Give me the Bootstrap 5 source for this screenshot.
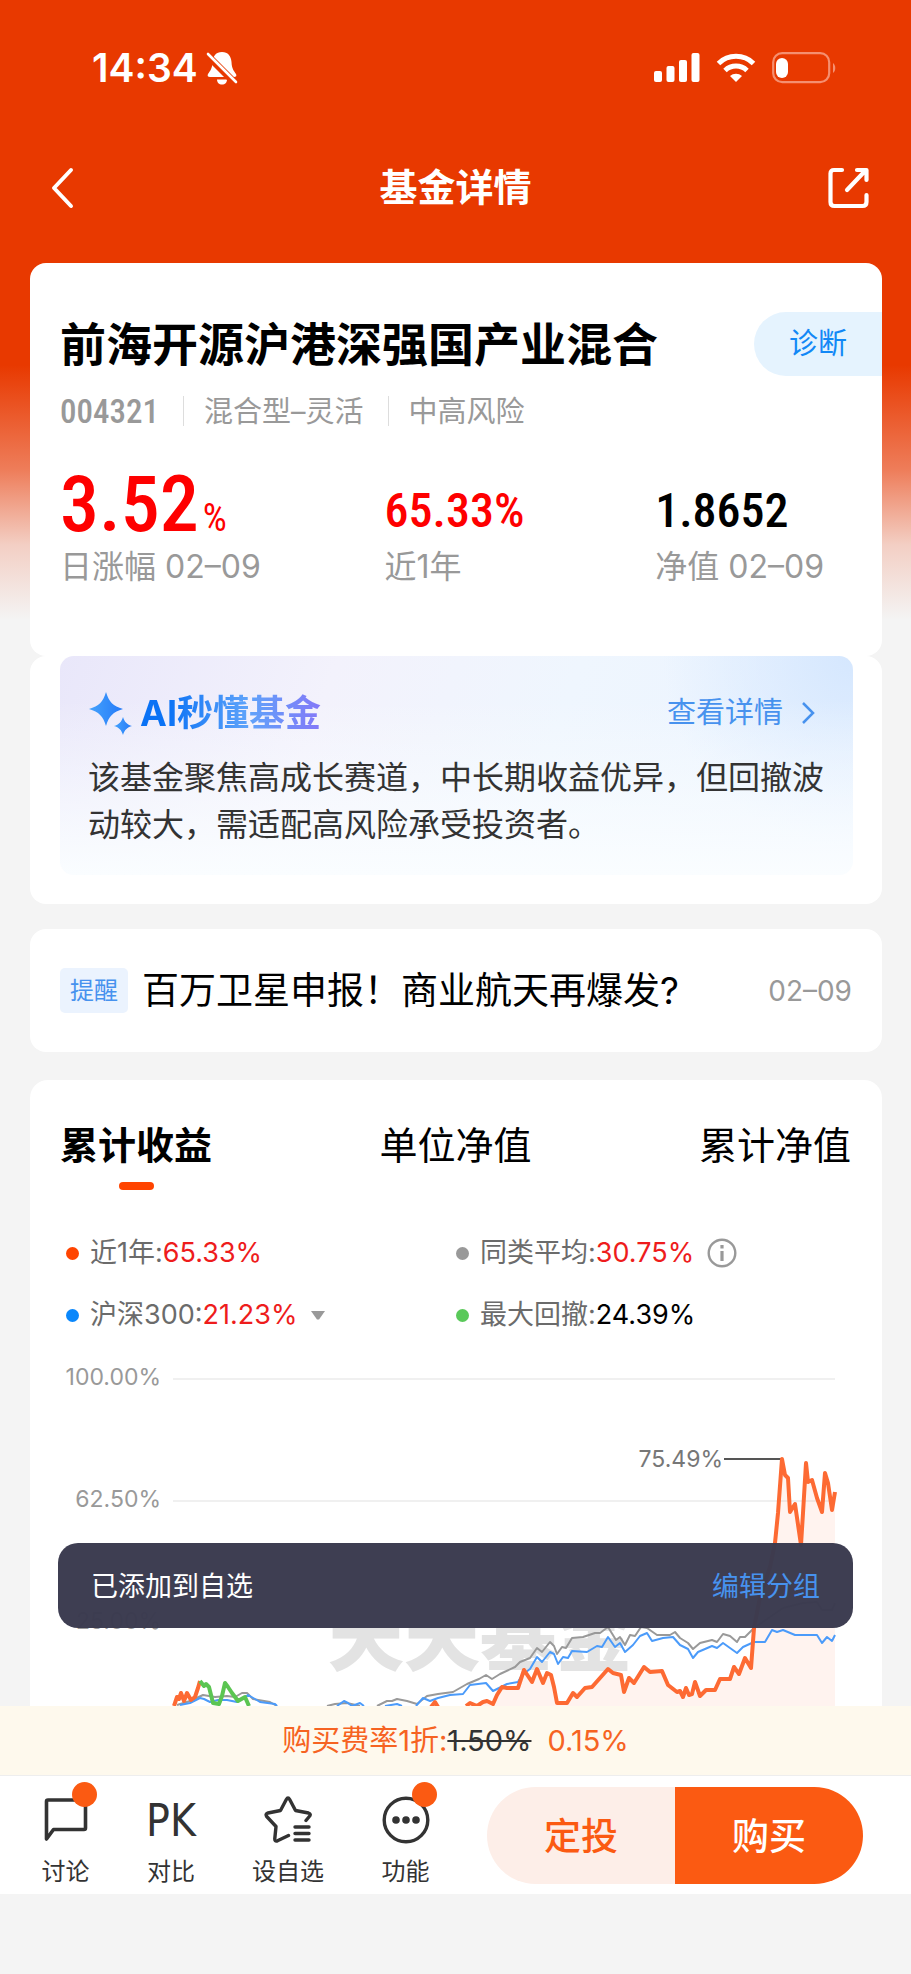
<!DOCTYPE html>
<html lang="zh-CN">
<head>
<meta charset="utf-8">
<meta name="viewport" content="width=device-width, initial-scale=1">
<title>基金详情</title>
<link rel="stylesheet" href="https://cdn.jsdelivr.net/npm/bootstrap@5.3.0/dist/css/bootstrap.min.css">
<style>
  body { font-family: Inter, "Noto Sans CJK SC", sans-serif; background: #f4f4f4; color: #000; font-size: 28px; }
  svg { display: block; flex: none; }
  a { text-decoration: none; }
  .page { background: linear-gradient(#e83900 365px, #ee7d5a 470px, #f3cfc4 545px, #f4f4f4 620px); }
  .status { padding: 40px 74px 0 92px; color: #fff; }
  .status > div { height: 56px; }
  .status-icons { gap: 16px; }
  .clock { font-size: 39px; font-weight: 600; line-height: 56px; }
  .topbar { height: 56px; margin: 64px 42px 47px; color: #fff; }
  .topbar h1 { font-size: 38px; font-weight: 700; }
  .topbar button { background: none; border: 0; color: inherit; padding: 0; }
  .sheets { padding: 0 29px 0 30px; }
  .sheet { background: #fff; border-radius: 16px; }
  .quote { padding: 49px 0 69px 30px; }
  .quote h2 { font-size: 46px; font-weight: 700; line-height: 64px; white-space: nowrap; }
  .diagnose { background: #e5f3fe; color: #1288f6; border: 0; border-radius: 32px 0 0 32px; width: 128px; height: 64px; font-size: 29px; }
  .muted { color: #999; }
  .din { font-family: "Roboto Condensed", "Liberation Sans Narrow", Roboto, sans-serif; font-weight: 500; }
  .meta { margin-top: 20px; height: 30px; font-size: 29px; line-height: 32px; }
  .meta .din { font-size: 33px; }
  .meta i { width: 1px; background: #ddd; height: 30px; margin: 0 20px 0 24px; }
  .stats { display: grid; grid-template-columns: 325fr 271fr 197fr; margin-top: 41px; margin-right: 30px; }
  .stats .din { font-size: 48px; line-height: 88px; height: 80px; display: flex; align-items: baseline; }
  .stats .din.big { font-size: 78px; line-height: 76px; }
  .stats .din .unit { font-size: 38px; font-weight: 400; margin-left: 4px; }
  .stats .muted { font-size: 32px; line-height: 40px; }
  .up { color: #fe0000; }
  .ai-wrap { padding: 0 29px 29px 30px; }
  .ai { border-radius: 14px; padding: 33px 28px 27px;
    background: linear-gradient(rgba(255,255,255,0) 20%, #fafdff 100%),
      radial-gradient(circle at 100% 0, #d5e7fe 0, rgba(213,231,254,0) 190px),
      linear-gradient(110deg, #e9e7fa 0, #f3f2fc 32%, #eff6fe 60%, #eaf3ff 100%); }
  .ai-head { height: 48px; }
  .ai-head strong { font-size: 36px; line-height: 48px; margin-left: 8px; background: linear-gradient(90deg, #0a72f5 15%, #5fa3fa 60%, #8478f8); -webkit-background-clip: text; background-clip: text; color: transparent; }
  .ai-head a { color: #4792ee; font-size: 29px; margin-right: 10px; gap: 18px; }
  .ai p { font-size: 32px; line-height: 47px; color: #333; margin: 17px -4px 0 0; }
  .notice { margin-top: 25px; height: 123px; padding: 0 30px; }
  .notice .tag { background: #ebf3fe; color: #4792ee; font-size: 24px; line-height: 45px; border-radius: 5px; width: 68px; text-align: center; }
  .notice a { color: #000; font-size: 37px; margin-left: 14px; }
  .perf { margin-top: 28px; border-radius: 18px 18px 0 0; }
  .tabs { padding: 40px 31px 0 30px; }
  .tabs button { background: none; border: 0; padding: 0; font-size: 38px; line-height: 50px; color: #000; }
  .tabs .active { font-weight: 700; }
  .tabs .active::after { content: ""; display: block; width: 35px; height: 8px; border-radius: 4px; background: #ff4400; margin: 12px auto 0; }
  .legend { display: grid; grid-template-columns: 390fr 397fr; row-gap: 22px; margin: 43px 29px 15px 36px; font-size: 27px; line-height: 40px; color: #6b6b6b; }
  .legend > div { display: flex; align-items: center; height: 40px; }
  .legend .dot { width: 13px; height: 13px; border-radius: 50%; margin-right: 11px; }
  .legend b { font-weight: 400; }
  .legend svg { margin-left: 13px; }
  .legend .red { color: #ee1c1c; }
  .chart { position: relative; }
  .chart > svg { width: 100%; height: auto; }
  .axis { font-size: 23px; fill: #999; text-anchor: end; }
  .notify { position: absolute; left: 28px; right: 29px; top: 193px; height: 85px; border-radius: 20px; background: rgba(58,58,79,.98); color: #fff; padding: 3px 33px 0; font-size: 27px; }
  .notify a { color: #4792ee; }
  .fee { background: #fef9ed; height: 69px; color: #f66322; font-size: 29px; }
  .fee s { color: #333; }
  .dock { background: #fff; border-top: 1px solid #eee; height: 119px; padding: 0 48px 0 13px; gap: 28px; }
  .tools { flex: 446 0 0; display: grid; grid-template-columns: 105fr 106fr 128fr 107fr; }
  .tools button { border: 0; background: none; padding: 19px 0 0; color: #333; font-size: 24px; line-height: 36px; display: flex; flex-direction: column; align-items: center; }
  .tools .glyph { height: 50px; position: relative; margin-bottom: 9px; }
  .tools .pk { font-family: "DejaVu Sans Condensed", "DejaVu Sans", sans-serif; font-size: 44px; line-height: 52px; }
  .alert-dot { position: absolute; width: 25px; height: 25px; border-radius: 50%; background: #fb5a12; right: -7px; top: -13px; }
  .trade { flex: 376 0 0; height: 97px; align-self: center; border-radius: 49px; overflow: hidden; }
  .trade button { flex: 1; border: 0; padding: 4px 0 0; font-size: 37px; font-weight: 500; }
  .plan { background: #fdeee8; color: #fb5a12; }
  .buy { background: #fb5a12; color: #fff; }
  .home-gap { height: 80px; }
</style>
</head>
<body>
<div class="page">
  <header>
    <div class="status"><div class="d-flex align-items-center">
      <span class="clock">14:34</span>
      <svg class="ms-2" width="32" height="34" viewBox="0 0 32 34" fill="#fff"><path d="M16 1c6 0 9 4 9.500 10 .3 7 2.500 9 4.500 12 1 2 0 3-2 3H4c-2 0-3-1-2-3 2-3 4.200-5 4.500-12C7 5 10 1 16 1z"/><path d="M11 28.500h10c0 3-2 5-5 5s-5-2-5-5z"/><path d="M0 3l30 30" stroke="#e83900" stroke-width="7"/><path d="M2 3l28 28" stroke="#fff" stroke-width="2.600" stroke-linecap="round"/></svg>
      <div class="status-icons d-flex align-items-center ms-auto">
        <svg width="46" height="30" viewBox="0 0 46 30" fill="#fff"><rect y="18" width="8" height="11" rx="2"/><rect x="12.500" y="13" width="8" height="16" rx="2"/><rect x="25" y="7" width="8" height="22" rx="2"/><rect x="37.500" y="0" width="8" height="29" rx="2"/></svg>
        <svg width="40" height="30" viewBox="0 0 40 30" fill="none" stroke="#fff" stroke-width="5"><path d="M2.500 10.500a25 25 0 0 1 35 0M9 17.500a16 16 0 0 1 22 0"/><path d="M20 29l-6-6a9 9 0 0 1 12 0z" fill="#fff" stroke="none"/></svg>
        <svg width="65" height="32" viewBox="0 0 65 32" fill="none"><rect x="1.200" y="1.200" width="56" height="29" rx="9" stroke="#f58f70" stroke-width="2.200"/><rect x="4" y="6" width="12" height="20" rx="6" fill="#fff"/><path d="M61 11c3 2 3 8 0 10z" fill="#f58f70"/></svg>
      </div>
    </div></div>
    <nav class="topbar d-flex align-items-center justify-content-between" aria-label="页面">
      <button type="button" aria-label="返回"><svg width="41" height="42" viewBox="0 0 41 42" fill="none" stroke="#fff" stroke-width="4" stroke-linecap="round" stroke-linejoin="round"><path d="M29 3L12 21l17 18"/></svg></button>
      <h1 class="m-0">基金详情</h1>
      <button type="button" aria-label="分享"><svg width="41" height="42" viewBox="0 0 41 42" fill="none" stroke="#fff" stroke-width="4.200" stroke-linecap="round" stroke-linejoin="round"><path d="M14 3H6Q2.500 3 2.500 6.500V35q0 4 4 4h28q4 0 4-4v-7M19 23L37 4M29 3h9.500v10"/></svg></button>
    </nav>
  </header>

  <main class="sheets">
    <section class="sheet quote">
      <div class="d-flex justify-content-between align-items-center">
        <h2 class="m-0">前海开源沪港深强国产业混合</h2>
        <button type="button" class="diagnose">诊断</button>
      </div>
      <div class="meta muted d-flex"><span class="din">004321</span><i></i><span>混合型–灵活</span><i></i><span>中高风险</span></div>
      <div class="stats">
        <div><div class="din big up">3.52<span class="unit">%</span></div><div class="muted">日涨幅 02–09</div></div>
        <div><div class="din up">65.33%</div><div class="muted">近1年</div></div>
        <div><div class="din">1.8652</div><div class="muted">净值 02–09</div></div>
      </div>
    </section>

    <section class="sheet ai-wrap"><div class="ai">
      <div class="ai-head d-flex align-items-center">
        <svg width="44" height="44" viewBox="0 0 44 44"><defs><linearGradient id="spark" x2="1"><stop stop-color="#45a2fc"/><stop offset="1" stop-color="#247af8"/></linearGradient></defs><g fill="url(#spark)"><path d="M18 1c3 10 7 14 17 17-10 3-14 7-17 17C15 25 11 21 1 18 11 15 15 11 18 1z"/><path d="M35 26c1.500 5 4 7.500 9 9-5 1.500-7.500 4-9 9-1.500-5-4-7.500-9-9 5-1.500 7.500-4 9-9z"/></g></svg>
        <strong>AI秒懂基金</strong>
        <a href="#" class="ms-auto d-flex align-items-center">查看详情<svg width="14" height="24" viewBox="0 0 14 24" fill="none" stroke="#4792ee" stroke-width="2.500"><path d="M2 2l10 10L2 22"/></svg></a>
      </div>
      <p>该基金聚焦高成长赛道，中长期收益优异，但回撤波动较大，需适配高风险承受投资者。</p>
    </div></section>

    <section class="sheet notice d-flex align-items-center">
      <span class="tag">提醒</span><a href="#">百万卫星申报！商业航天再爆发?</a><time class="muted ms-auto">02–09</time>
    </section>

    <section class="sheet perf">
      <div class="tabs d-flex justify-content-between align-items-start" role="tablist">
        <button type="button" role="tab" aria-selected="true" class="active">累计收益</button>
        <button type="button" role="tab" aria-selected="false">单位净值</button>
        <button type="button" role="tab" aria-selected="false">累计净值</button>
      </div>
      <div class="legend">
        <div><span class="dot" style="background:#ff4400"></span>近1年:<b class="red">65.33%</b></div>
        <div><span class="dot" style="background:#999"></span>同类平均:<b class="red">30.75%</b><svg width="30" height="30" viewBox="0 0 30 30" fill="none" stroke="#999"><circle cx="15" cy="15" r="13.300" stroke-width="2.400"/><path d="M15 13v10M15 7v3.500" stroke-width="3.200"/></svg></div>
        <div><span class="dot" style="background:#0a87fb"></span>沪深300:<b class="red">21.23%</b><svg width="16" height="11" viewBox="0 0 16 11" fill="#999"><path d="M1 1h14L9 9.500H7z"/></svg></div>
        <div><span class="dot" style="background:#5ac95a"></span>最大回撤:<b class="text-black">24.39%</b></div>
      </div>
      <div class="chart">
        <svg viewBox="30 1350 852 356" role="img" aria-label="累计收益走势">
          <g stroke="#ececec" stroke-width="1.500"><path d="M173 1379H835M173 1501H835M173 1623H835"/></g>
          <text x="480" y="1665" text-anchor="middle" font-size="76" font-weight="900" fill="#e3e3e3">天天基金</text>
          <g class="axis"><text x="161" y="1385">100.00%</text><text x="161" y="1507">62.50%</text><text x="161" y="1629">25.00%</text></g>
          <text x="723" y="1467" text-anchor="end" font-size="23" fill="#777">75.49%</text>
          <path d="M724 1459H781" stroke="#555" stroke-width="2"/>
          <path fill="#ff5a1e" fill-opacity=".07" d="M466 1706L470 1703 477 1706 487 1701 493 1704 497 1695 502 1687 518 1688 524 1670 532 1682 537 1669 543 1683 547 1673 551 1675 557 1703 567 1703 573 1693 592 1687 608 1669 621 1675 624 1692 629 1678 634 1683 644 1667 662 1671 668 1685 683 1695 715 1690 720 1679 730 1679 734 1667 739 1674 745 1658 751 1668 754 1628 760 1597 775 1543 778 1513 782 1459 785 1475 788 1478 790 1512 795 1504 801 1545 803 1513 806 1463 808 1482 812 1480 817 1498 822 1512 825 1473 828 1483 832 1510 835 1492V1706z"/>
          <g fill="none" stroke-linejoin="round" stroke-width="2">
            <path stroke="#999" d="M177 1705L190 1701 203 1695 215 1697 227 1696 235 1697 242 1693 247 1693 253 1699 270 1702 277 1706M327 1706L335 1704 347 1703 360 1706M377 1706L387 1701 392 1701 397 1699 407 1701 417 1704 427 1696 438 1694 453 1692 467 1684 479 1679 486 1675 492 1679 500 1674 515 1667 520 1662 530 1658 537 1648 542 1652 550 1642 554 1646 557 1654 562 1647 566 1648 572 1638 583 1637 595 1633 600 1633 608 1627 616 1640 620 1637 625 1645 630 1635 635 1636 641 1627 647 1628 657 1635 670 1635 675 1632 680 1638 688 1643 693 1649 700 1643 712 1640 717 1642 723 1634 730 1636 737 1642 740 1637 745 1637 754 1628 770 1617 783 1608 803 1603 817 1602 822 1610 832 1610 835 1603"/>
            <path stroke="#4b9bfa" d="M180 1705L190 1703 200 1698 204 1699 210 1702 218 1700 227 1700 237 1702 248 1695 255 1699 260 1702 275 1704 277 1706M337 1706L344 1701 348 1703 352 1706 360 1703 364 1706M385 1706L397 1704 402 1706M416 1706L423 1698 430 1701 438 1698 450 1695 463 1694 470 1685 486 1683 493 1691 507 1684 518 1682 522 1675 530 1669 537 1657 542 1662 550 1652 554 1654 558 1664 563 1657 568 1658 572 1651 587 1652 597 1646 602 1647 608 1637 615 1647 620 1643 625 1652 633 1645 640 1636 647 1633 652 1641 663 1638 673 1637 680 1645 688 1649 693 1658 698 1652 712 1646 717 1648 723 1643 737 1653 743 1647 754 1642 765 1642 772 1630 777 1632 783 1630 795 1635 817 1635 822 1643 827 1637 832 1641 835 1635"/>
            <g stroke-width="4">
              <path stroke="#fd6a33" d="M174 1706L177 1697 179 1699 181 1693 184 1701 187 1693 191 1700 195 1697 198 1688 200 1681M431 1707L435 1702 438 1707M466 1706L470 1703 477 1706 483 1702 487 1701 493 1704 497 1695 502 1687 507 1688 518 1688 524 1670 532 1682 537 1669 543 1683 547 1673 551 1675 554 1687 557 1703 567 1703 573 1693 577 1697 585 1688 592 1687 600 1678 608 1669 613 1673 621 1675 624 1692 629 1678 634 1683 644 1667 650 1672 662 1671 668 1685 677 1692 680 1691 683 1697 686 1688 689 1695 692 1694 695 1682 700 1696 706 1690 715 1690 720 1679 730 1679 734 1667 739 1674 745 1658 751 1668 754 1628 760 1597 770 1567 775 1543 778 1513 782 1459 785 1475 788 1478 790 1512 795 1504 801 1545 803 1513 806 1463 808 1482 812 1480 817 1498 822 1512 825 1473 828 1483 832 1510 835 1492"/>
              <path stroke="#5bc552" d="M200 1681L204 1686 206 1684 209 1687 213 1703 219 1704 222 1696 225 1683 228 1687 232 1693 238 1701 245 1697 249 1706"/>
            </g>
          </g>
        </svg>
        <div class="notify d-flex align-items-center justify-content-between" role="status"><span>已添加到自选</span><a href="#">编辑分组</a></div>
      </div>
    </section>
  </main>

  <footer>
    <div class="fee d-flex align-items-center justify-content-center">购买费率1折:<s>1.50%</s><span class="ms-3">0.15%</span></div>
    <div class="dock d-flex">
      <div class="tools">
        <button type="button"><span class="glyph"><svg width="48" height="50" viewBox="0 0 48 50" fill="none" stroke="#333" stroke-width="3.600" stroke-linejoin="round"><path d="M4.500 44V6.500Q4.500 5 6 5h36q1.500 0 1.500 1.500V33q0 1.500-1.500 1.500H11.500z"/></svg><i class="alert-dot"></i></span>讨论</button>
        <button type="button"><span class="glyph pk">PK</span>对比</button>
        <button type="button"><span class="glyph"><svg width="48" height="50" viewBox="0 0 48 50" fill="none" stroke="#333" stroke-width="3.400" stroke-linecap="round" stroke-linejoin="round"><path d="M24.500 40.500L13.500 45.800Q10.500 47 10.800 43.500L12 31.500 2.700 21.500Q1 18.800 4 18L16.500 15.500 22.300 4.500Q24 1.500 25.700 4.500L31.500 15.500 44.500 18Q47.500 19 45.300 21.500L42 25.500"/><path d="M31 32h14M31 38.500h14M31 45h14"/></svg></span>设自选</button>
        <button type="button"><span class="glyph"><svg width="48" height="50" viewBox="0 0 48 50"><circle cx="24" cy="25" r="21.800" fill="none" stroke="#333" stroke-width="3.400"/><g fill="#333"><circle cx="14" cy="25" r="3.800"/><circle cx="24" cy="25" r="3.800"/><circle cx="34" cy="25" r="3.800"/></g></svg><i class="alert-dot"></i></span>功能</button>
      </div>
      <div class="trade d-flex"><button type="button" class="plan">定投</button><button type="button" class="buy">购买</button></div>
    </div>
    <div class="home-gap"></div>
  </footer>
</div>
<script src="https://cdn.jsdelivr.net/npm/bootstrap@5.3.0/dist/js/bootstrap.bundle.min.js"></script>
</body>
</html>
